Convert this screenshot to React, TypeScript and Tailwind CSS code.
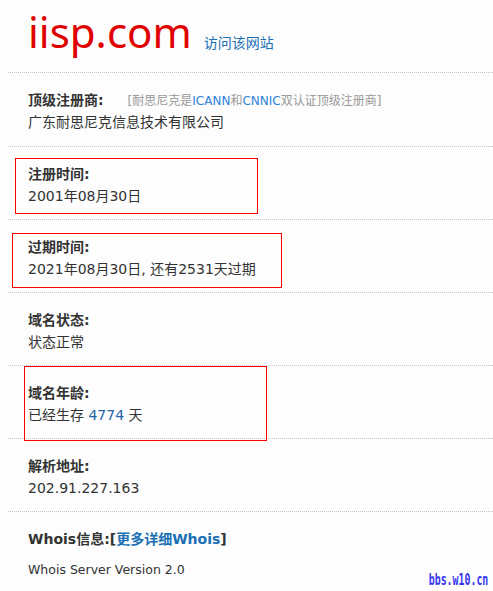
const font = "font-['DejaVu_Sans','Noto_Sans_CJK_SC',sans-serif]";

type Row = {
  label: string;
  value: React.ReactNode;
  box?: string;
};

const rows: Row[] = [
  {
    label: '注册时间:',
    value: '2001年08月30日',
    box: 'left-[7px] top-[11px] w-[243px] h-[56px]',
  },
  {
    label: '过期时间:',
    value: '2021年08月30日, 还有2531天过期',
    box: 'left-[4px] top-[13px] w-[270px] h-[55px]',
  },
  { label: '域名状态:', value: '状态正常' },
  {
    label: '域名年龄:',
    value: (
      <>
        已经生存 <span className="text-[#1f64a8]">4774</span> 天
      </>
    ),
    box: 'left-[16px] top-0 w-[243px] h-[75px]',
  },
  { label: '解析地址:', value: '202.91.227.163' },
];

function InfoRow({ label, value, box }: Row) {
  return (
    <div className="relative ml-2 h-[73px] border-b border-dotted border-[#c4c4c4] pl-5 pt-4 text-[14px] leading-[22px] text-[#333]">
      <div className="h-[22px] font-bold">{label}</div>
      <div className="h-[22px]">{value}</div>
      {box && <div className={`absolute border border-[#ff0000] ${box}`} />}
    </div>
  );
}

export default function App() {
  return (
    <main className={`relative min-h-[591px] w-[493px] bg-[#fcfdfc] ${font}`}>
      <header className="ml-2 flex h-[73px] items-baseline border-b border-dotted border-[#c4c4c4] pl-5 pt-[11px]">
        <span className="font-['Noto_Sans',sans-serif] text-[42px] leading-[42px] text-[#e00000]">iisp.com</span>
        <a className="ml-3 text-[14px] text-[#1a6fb5]">访问该网站</a>
      </header>

      <div className="relative ml-2 h-[74px] border-b border-dotted border-[#c4c4c4] pl-5 pt-4 text-[14px] leading-[22px] text-[#333]">
        <div className="flex h-[22px] items-baseline">
          <span className="font-bold">顶级注册商:</span>
          <span className="ml-6 text-[12px] text-[#999]">
            [耐思尼克是<span className="text-[#2c82d8]">ICANN</span>和<span className="text-[#2c82d8]">CNNIC</span>双认证顶级注册商]
          </span>
        </div>
        <div className="h-[22px]">广东耐思尼克信息技术有限公司</div>
      </div>

      {rows.map((r) => (
        <InfoRow key={r.label} {...r} />
      ))}

      <div className="ml-2 pl-5 pt-4 text-[#333]">
        <div className="h-[22px] text-[14px] leading-[22px] font-bold">
          Whois信息:[<a className="text-[#1a6fb5]">更多详细Whois</a>]
        </div>
        <div className="mt-[11px] text-[12.5px] leading-[18px]">Whois Server Version 2.0</div>
      </div>

      <div className="absolute right-[5px] bottom-[3px] origin-right scale-x-[0.66] font-['DejaVu_Sans_Mono',monospace] text-[15px] leading-[15px] font-bold text-[#3535ee]">
        bbs.w10.cn
      </div>
    </main>
  );
}
